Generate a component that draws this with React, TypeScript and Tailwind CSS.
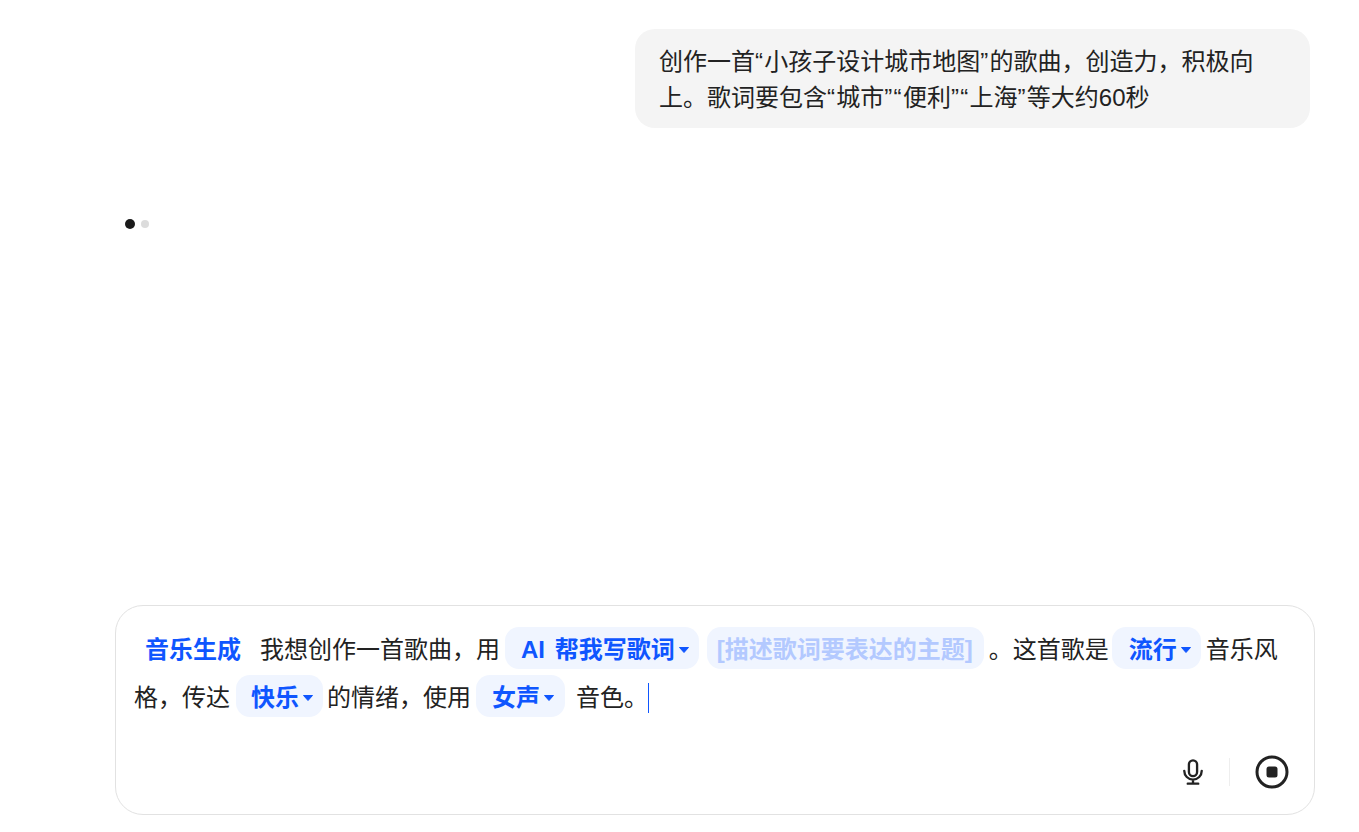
import React from 'react';

function Pill({ label, className = '' }: { label: string; className?: string }) {
  return (
    <span className={`inline-block h-[42px] rounded-[14px] bg-[#f0f5ff] align-baseline font-bold leading-[46px] text-[#0f56ff] ${className}`}>
      {label}
      <svg className="ml-1 inline-block h-[10px] w-[10px] align-[3px]" viewBox="0 0 10 10">
        <path d="M0.5 2.5h9L5 7.5z" fill="#0f56ff" stroke="#0f56ff" strokeLinejoin="round" />
      </svg>
    </span>
  );
}

// 引号比默认字体略宽
function Q({ children }: { children: string }) {
  return <span className="tracking-[1.3px]">{children}</span>;
}

export default function App() {
  return (
    <div className="flex h-[832px] w-full flex-col overflow-hidden bg-white font-['Liberation_Sans','Noto_Sans_CJK_SC',sans-serif] text-[#222222]">
      <div className="flex flex-1 flex-col px-[49px] pt-[29px]">
        {/* 用户消息 */}
        <div className="flex justify-end">
          <div className="w-[675px] rounded-[20px] bg-[#f4f4f4] pb-3 pl-6 pr-12 pt-[15px] text-2xl leading-9">
            创作一首<Q>“</Q>小孩子设计城市地图<Q>”</Q>的歌曲，创造力，积极向上。歌词要包含<Q>“</Q>城市<Q>”“</Q>便利<Q>”“</Q>上海<Q>”</Q>等大约60秒
          </div>
        </div>

        {/* 加载中 */}
        <div className="mt-[91px] flex items-center gap-[6px] pl-[76px]">
          <span className="h-[10px] w-[10px] rounded-full bg-[#1a1a1a]" />
          <span className="h-2 w-2 rounded-full bg-[#dcdcdc]" />
        </div>
      </div>

      {/* 输入框 */}
      <div className="mb-[17px] ml-[115px] h-[210px] w-[1200px] rounded-[28px] border border-[#e2e2e2] pl-[18px] pr-[29px] pt-5">
        <div className="text-2xl leading-[48px]">
          <span className="ml-[11px] mr-[19px] font-bold text-[#0f56ff]">音乐生成</span>
          我想创作一首歌曲，用
          <Pill label="AI 帮我写歌词" className="ml-[5px] pl-4 pr-[10px] [word-spacing:3px]" />
          <span className="ml-[8px] mr-[5px] inline-block h-[42px] rounded-[14px] bg-[#f0f5ff] pl-[10px] pr-[11px] font-bold leading-[46px] text-[#b3c9ff]">
            [描述歌词要表达的主题]
          </span>
          。这首歌是
          <Pill label="流行" className="ml-[3px] mr-[5px] pl-[17px] pr-[10px]" />
          音乐风格，传达
          <Pill label="快乐" className="ml-[6px] mr-1 pl-[15px] pr-[10px]" />
          的情绪，使用
          <Pill label="女声" className="ml-[5px] mr-[11px] pl-4 pr-[11px]" />
          音色。
          <span className="inline-block h-[30px] w-px bg-[#0f56ff] align-[-7px]" />
        </div>
        <div className="mt-[33px] flex items-center justify-end">
          <svg className="h-7 w-7" viewBox="0 0 24 24" fill="none" stroke="#222222" strokeWidth="2" strokeLinecap="round">
            <rect x="8.5" y="2" width="7" height="13.5" rx="3.5" />
            <path d="M4.5 11c0 4.2 3.3 7.5 7.5 7.5s7.5-3.3 7.5-7.5M12 18.5V22M7.5 22h9" />
          </svg>
          <span className="ml-[22px] mr-[25px] h-7 w-px bg-[#eeeeee]" />
          <svg className="mr-[-4px] h-[34px] w-[34px]" viewBox="0 0 34 34" fill="none">
            <circle cx="17" cy="17" r="15" stroke="#222222" strokeWidth="3" />
            <rect x="11.5" y="11.5" width="11" height="11" rx="2.5" fill="#222222" />
          </svg>
        </div>
      </div>
    </div>
  );
}
